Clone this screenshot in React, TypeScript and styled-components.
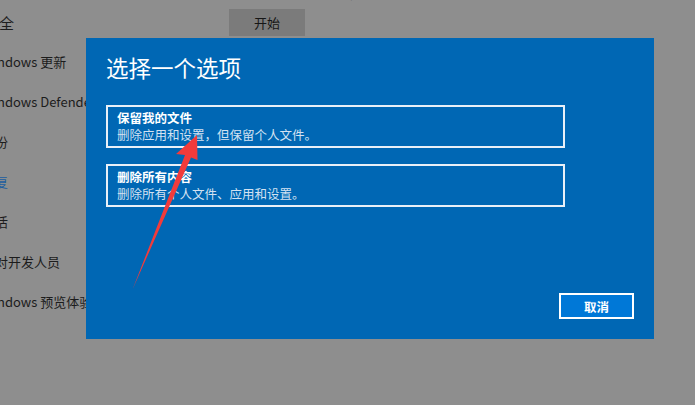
import React from "react";
import styled, { createGlobalStyle } from "styled-components";

const Global = createGlobalStyle`
  html, body {
    margin: 0;
    padding: 0;
    width: 695px;
    height: 405px;
    overflow: hidden;
    background: #8e8e8e;
    font-family: "Noto Sans CJK SC", "Noto Sans", sans-serif;
  }
`;

const Page = styled.div`
  position: relative;
  width: 695px;
  height: 405px;
  overflow: hidden;
  display: flex;
  flex-direction: row;
`;

const Sidebar = styled.nav`
  width: 229px;
  flex: none;
  overflow: hidden;
  white-space: nowrap;
  display: flex;
  flex-direction: column;
  padding-top: 13px;
`;

const SideHeading = styled.div`
  font-size: 15px;
  line-height: 20px;
  height: 20px;
  color: #1e1e1e;
  margin-left: -61px;
  margin-bottom: 9px;
`;

const SideItem = styled.div<{ $active?: boolean }>`
  font-size: 13px;
  line-height: 40px;
  height: 40px;
  margin-left: -18px;
  color: ${(p) => (p.$active ? "#1c5d9f" : "#1c1c1c")};
`;

const Main = styled.main`
  flex: 1;
  display: flex;
  flex-direction: column;
  align-items: flex-start;
  white-space: nowrap;
  overflow: hidden;
`;

const Intro = styled.p`
  margin: -15px 0 0 3px;
  font-size: 13px;
  line-height: 16px;
  color: #3a3a3a;
`;

const GreyButton = styled.button`
  margin-top: 8px;
  width: 76px;
  height: 27px;
  border: none;
  background: #7b7b7b;
  color: #161616;
  font-family: inherit;
  font-size: 13px;
  padding: 0;
`;

const Dialog = styled.div`
  position: absolute;
  left: 86px;
  top: 38px;
  width: 568px;
  height: 301px;
  box-sizing: border-box;
  background: #0067b4;
  padding: 14px 20px 20px 20px;
  display: flex;
  flex-direction: column;
`;

const Title = styled.h1`
  margin: 0 0 23px 0;
  font-size: 22.5px;
  line-height: 30px;
  font-weight: 400;
  color: #ffffff;
`;

const OptionList = styled.div`
  display: flex;
  flex-direction: column;
  gap: 16px;
`;

const Option = styled.div`
  width: 459px;
  height: 43px;
  box-sizing: border-box;
  border: 2px solid #e9f0f8;
  padding: 2px 9px 2px 9px;
  display: flex;
  flex-direction: column;
`;

const OptionTitle = styled.div`
  font-size: 12.5px;
  line-height: 17px;
  font-weight: 700;
  color: #ffffff;
`;

const OptionDesc = styled.div`
  font-size: 12.5px;
  line-height: 18px;
  color: #d3e2f2;
`;

const Footer = styled.div`
  margin-top: auto;
  display: flex;
  justify-content: flex-end;
`;

const CancelButton = styled.button`
  width: 75px;
  height: 26px;
  box-sizing: border-box;
  border: 2px solid #ffffff;
  background: #0078d7;
  color: #ffffff;
  font-family: inherit;
  font-size: 12.5px;
  font-weight: 700;
  padding: 0;
`;

const ArrowLayer = styled.svg`
  position: absolute;
  left: 0;
  top: 0;
  pointer-events: none;
`;

const sideItems = [
  { label: "Windows 更新" },
  { label: "Windows Defender 安全中心" },
  { label: "备份" },
  { label: "恢复", active: true },
  { label: "激活" },
  { label: "针对开发人员" },
  { label: "Windows 预览体验计划" },
];

export default function App() {
  return (
    <>
      <Global />
      <Page>
        <Sidebar>
          <SideHeading>更新和安全</SideHeading>
          {sideItems.map((it) => (
            <SideItem key={it.label} $active={it.active}>
              {it.label}
            </SideItem>
          ))}
        </Sidebar>
        <Main>
          <Intro>如果电脑未正常运行，重置电脑可能会解决问题     。</Intro>
          <GreyButton>开始</GreyButton>
        </Main>
        <Dialog>
          <Title>选择一个选项</Title>
          <OptionList>
            <Option>
              <OptionTitle>保留我的文件</OptionTitle>
              <OptionDesc>删除应用和设置，但保留个人文件。</OptionDesc>
            </Option>
            <Option>
              <OptionTitle>删除所有内容</OptionTitle>
              <OptionDesc>删除所有个人文件、应用和设置。</OptionDesc>
            </Option>
          </OptionList>
          <Footer>
            <CancelButton>取消</CancelButton>
          </Footer>
        </Dialog>
        <ArrowLayer width="695" height="405" viewBox="0 0 695 405">
          <polygon
            points="197,135 176,154 185,155 132.5,289.5 191,157.5 197.5,160"
            fill="#f23b3b"
          />
        </ArrowLayer>
      </Page>
    </>
  );
}
